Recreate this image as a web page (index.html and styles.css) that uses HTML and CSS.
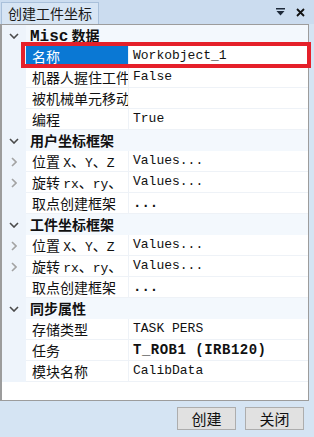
FILE: index.html
```html
<!DOCTYPE html>
<html lang="zh">
<head>
    <meta charset="UTF-8">
    <title>创建工件坐标</title>
    <link rel="stylesheet" href="styles.css">
</head>
<body>
    <div class="window">
        <div class="titlebar">
            <div class="tab">创建工件坐标</div>
            <div class="title-icons">
                <svg width="9" height="8" viewBox="0 0 9 8"><rect x="0" y="0" width="9" height="1.5" fill="#1e2a3a"/><polygon points="0.5,3 8.5,3 4.5,7.5" fill="#1e2a3a"/></svg>
                <svg width="9" height="9" viewBox="0 0 9 9"><path d="M1 1 L8 8 M8 1 L1 8" stroke="#111" stroke-width="1.8"/></svg>
            </div>
        </div>

        <div class="panel">
            <div class="grid">
                <div class="row header">
                    <div class="gutter"><svg class="chev" width="10" height="6" viewBox="0 0 10 6"><polyline points="1,1 5,5 9,1"/></svg></div>
                    <div class="head-text"><span class="mono">Misc</span> 数据</div>
                </div>
                <div class="row">
                    <div class="gutter"></div>
                    <div class="name selected">名称</div>
                    <div class="value">Workobject_1</div>
                </div>
                <div class="row">
                    <div class="gutter"></div>
                    <div class="name">机器人握住工件</div>
                    <div class="value">False</div>
                </div>
                <div class="row">
                    <div class="gutter"></div>
                    <div class="name">被机械单元移动</div>
                    <div class="value"></div>
                </div>
                <div class="row">
                    <div class="gutter"></div>
                    <div class="name">编程</div>
                    <div class="value">True</div>
                </div>

                <div class="row header">
                    <div class="gutter"><svg class="chev" width="10" height="6" viewBox="0 0 10 6"><polyline points="1,1 5,5 9,1"/></svg></div>
                    <div class="head-text">用户坐标框架</div>
                </div>
                <div class="row">
                    <div class="gutter"><svg class="arrow" width="6" height="10" viewBox="0 0 6 10"><polyline points="1,1 5,5 1,9"/></svg></div>
                    <div class="name">位置 <span class="mono">X</span>、<span class="mono">Y</span>、<span class="mono">Z</span></div>
                    <div class="value">Values...</div>
                </div>
                <div class="row">
                    <div class="gutter"><svg class="arrow" width="6" height="10" viewBox="0 0 6 10"><polyline points="1,1 5,5 1,9"/></svg></div>
                    <div class="name">旋转 <span class="mono">rx</span>、<span class="mono">ry</span>、</div>
                    <div class="value">Values...</div>
                </div>
                <div class="row">
                    <div class="gutter"></div>
                    <div class="name">取点创建框架</div>
                    <div class="value bold">...</div>
                </div>

                <div class="row header">
                    <div class="gutter"><svg class="chev" width="10" height="6" viewBox="0 0 10 6"><polyline points="1,1 5,5 9,1"/></svg></div>
                    <div class="head-text">工件坐标框架</div>
                </div>
                <div class="row">
                    <div class="gutter"><svg class="arrow" width="6" height="10" viewBox="0 0 6 10"><polyline points="1,1 5,5 1,9"/></svg></div>
                    <div class="name">位置 <span class="mono">X</span>、<span class="mono">Y</span>、<span class="mono">Z</span></div>
                    <div class="value">Values...</div>
                </div>
                <div class="row">
                    <div class="gutter"><svg class="arrow" width="6" height="10" viewBox="0 0 6 10"><polyline points="1,1 5,5 1,9"/></svg></div>
                    <div class="name">旋转 <span class="mono">rx</span>、<span class="mono">ry</span>、</div>
                    <div class="value">Values...</div>
                </div>
                <div class="row">
                    <div class="gutter"></div>
                    <div class="name">取点创建框架</div>
                    <div class="value bold">...</div>
                </div>

                <div class="row header">
                    <div class="gutter"><svg class="chev" width="10" height="6" viewBox="0 0 10 6"><polyline points="1,1 5,5 9,1"/></svg></div>
                    <div class="head-text">同步属性</div>
                </div>
                <div class="row">
                    <div class="gutter"></div>
                    <div class="name">存储类型</div>
                    <div class="value">TASK PERS</div>
                </div>
                <div class="row">
                    <div class="gutter"></div>
                    <div class="name">任务</div>
                    <div class="value bold wide">T_ROB1 (IRB120)</div>
                </div>
                <div class="row">
                    <div class="gutter"></div>
                    <div class="name">模块名称</div>
                    <div class="value">CalibData</div>
                </div>
            </div>
            <div class="highlight"></div>
        </div>

        <div class="footer">
            <button class="btn">创建</button>
            <button class="btn">关闭</button>
        </div>
    </div>
</body>
</html>
```

FILE: styles.css
```css
body {
    margin: 0;
    background: #d5e4f3;
    font-family: "Noto Sans CJK SC", sans-serif;
    color: #111;
}
.window {
    width: 314px;
    height: 437px;
    display: flex;
    flex-direction: column;
}
.titlebar {
    height: 24px;
    display: flex;
    align-items: flex-end;
    justify-content: space-between;
    background: #cbdcef;
}
.tab {
    height: 21px;
    margin-left: 1px;
    padding: 0 6px;
    border: 1px solid #a9c0da;
    border-bottom: none;
    background: #d7e5f4;
    font-size: 14px;
    line-height: 21px;
    color: #1a1a1a;
}
.title-icons {
    display: flex;
    align-items: center;
    gap: 11px;
    padding-right: 9px;
    height: 24px;
}
.panel {
    position: relative;
    width: 306px;
    height: 375px;
    background: #fff;
    border: 1px solid #9c9c9c;
    border-left-width: 2px;
}
.grid {
    display: flex;
    flex-direction: column;
}
.row {
    display: grid;
    grid-template-columns: 24px 103px 1fr;
    height: 21px;
    line-height: 20px;
}
.gutter {
    background: #eef4fb;
    display: flex;
    align-items: center;
    justify-content: center;
}
.chev polyline {
    fill: none;
    stroke: #4a4a4a;
    stroke-width: 1.6;
}
.arrow polyline {
    fill: none;
    stroke: #a3a3a3;
    stroke-width: 1.6;
}
.name {
    padding-left: 6px;
    font-size: 14px;
    white-space: nowrap;
    overflow: hidden;
    border-right: 1px solid #eef2f7;
    border-bottom: 1px solid #eef2f7;
}
.name.selected {
    background: #0a78d4;
    color: #fff;
}
.value {
    padding-left: 4px;
    font-family: "Liberation Mono", "Noto Sans CJK SC", monospace;
    font-size: 13px;
    white-space: nowrap;
    overflow: hidden;
    border-bottom: 1px solid #eef2f7;
}
.bold {
    font-weight: bold;
    font-size: 14px;
}
.wide {
    letter-spacing: 0.5px;
}
.mono {
    font-family: "Liberation Mono", monospace;
    font-size: 13px;
}
.header {
    background: #f3f8fd;
}
.head-text {
    grid-column: 2 / 4;
    padding-left: 4px;
    font-size: 14px;
    font-weight: bold;
}
.head-text .mono {
    font-size: 16px;
}
.highlight {
    position: absolute;
    left: 19px;
    top: 17px;
    width: 282px;
    height: 18px;
    border: 4px solid #e5202a;
}
.footer {
    flex: 1;
    display: flex;
    justify-content: flex-end;
    align-items: flex-start;
    gap: 9px;
    padding: 6px 10px 0 0;
}
.btn {
    width: 59px;
    height: 23px;
    padding: 0;
    background: #e1e1e1;
    border: 1px solid #adadad;
    font-family: "Noto Sans CJK SC", sans-serif;
    font-size: 15px;
    line-height: 20px;
    color: #111;
}
```
